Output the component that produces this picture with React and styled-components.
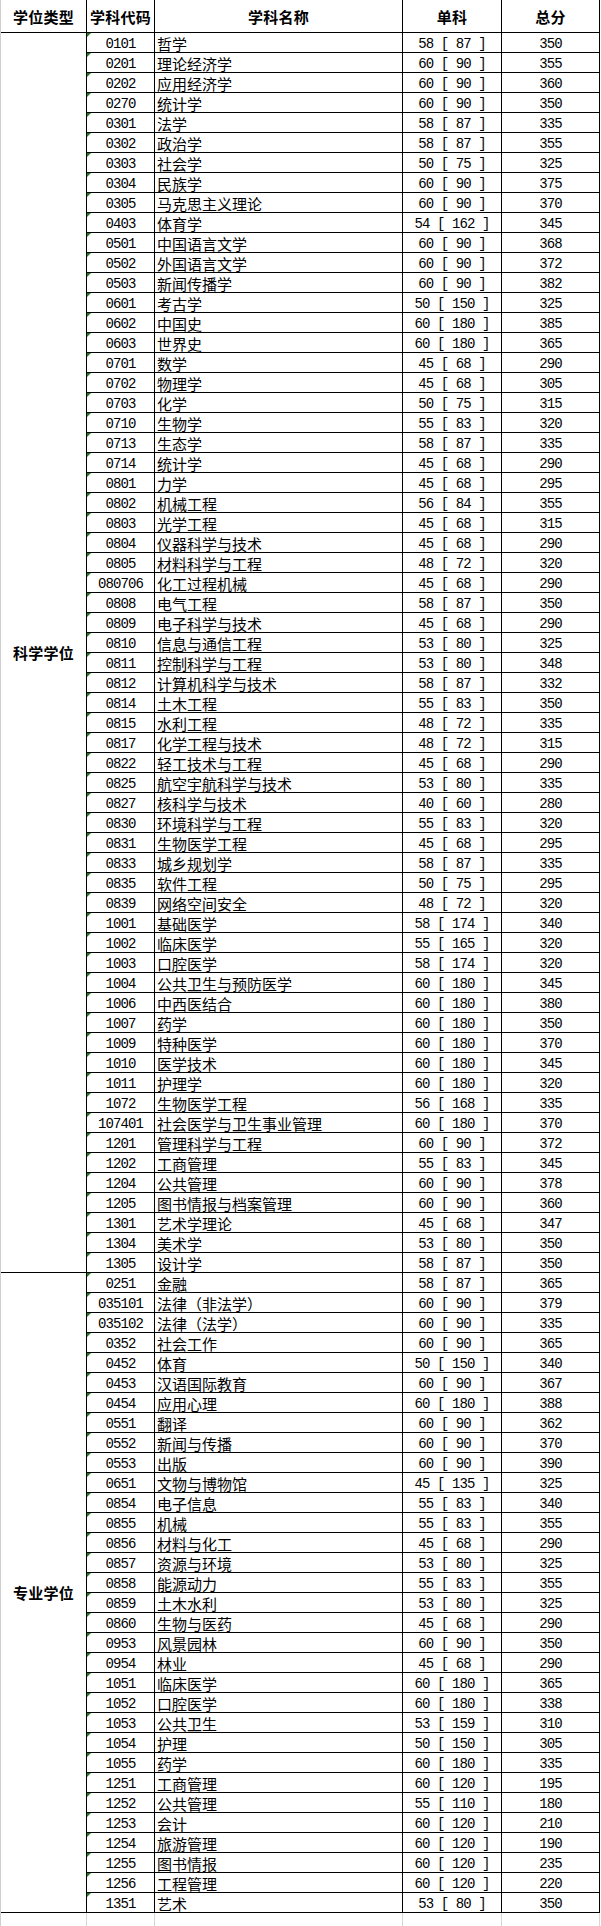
import React from 'react'
import styled, { createGlobalStyle } from 'styled-components'

const GlobalStyle = createGlobalStyle`
  html, body {
    margin: 0;
    padding: 0;
    background: #fff;
    overflow: hidden;
  }
`

const COLS = '86px 68px 248px 99px 98px'

const Sheet = styled.div`
  display: grid;
  grid-template-columns: ${COLS};
  grid-template-rows: 33px;
  grid-auto-rows: 20px;
  width: 599px;
  border-left: 1px solid #cfcfcf;
  font-family: "Noto Sans CJK SC", "Noto Sans", sans-serif;
  color: #000;
`

const Cell = styled.div`
  box-sizing: border-box;
  border-right: 1px solid #000;
  border-bottom: 1px solid #000;
  display: flex;
  align-items: center;
  justify-content: ${p => (p.$left ? 'flex-start' : 'center')};
  padding: 2px 0 0 ${p => (p.$left ? '2px' : '0')};
  font-size: 15px;
  white-space: pre;
  overflow: hidden;
`

const HeadCell = styled(Cell)`
  padding: 0;
  font-weight: bold;
  font-size: 15px;
  letter-spacing: 0.3px;
`

const GroupCell = styled(Cell)`
  grid-column: 1;
  grid-row: span ${p => p.$span};
  padding: 0;
  font-weight: bold;
  font-size: 15px;
  letter-spacing: 0.3px;
`

const NumCell = styled(Cell)`
  font-family: "Liberation Mono", "DejaVu Sans Mono", monospace;
  font-size: 14px;
  letter-spacing: -0.9px;
`

const CodeCell = styled(NumCell)`
  position: relative;

  &::before {
    content: '';
    position: absolute;
    top: 0;
    left: 0;
    border-top: 4px solid #1e7a1e;
    border-right: 4px solid transparent;
  }
`

const Filler = styled.div`
  display: grid;
  grid-template-columns: ${COLS};
  width: 599px;
  height: 13px;
  border-left: 1px solid #cfcfcf;

  & > div {
    border-right: 1px solid #d6d6d6;
  }
`

const science = [
  ['0101', '哲学', 58, 87, 350],
  ['0201', '理论经济学', 60, 90, 355],
  ['0202', '应用经济学', 60, 90, 360],
  ['0270', '统计学', 60, 90, 350],
  ['0301', '法学', 58, 87, 335],
  ['0302', '政治学', 58, 87, 355],
  ['0303', '社会学', 50, 75, 325],
  ['0304', '民族学', 60, 90, 375],
  ['0305', '马克思主义理论', 60, 90, 370],
  ['0403', '体育学', 54, 162, 345],
  ['0501', '中国语言文学', 60, 90, 368],
  ['0502', '外国语言文学', 60, 90, 372],
  ['0503', '新闻传播学', 60, 90, 382],
  ['0601', '考古学', 50, 150, 325],
  ['0602', '中国史', 60, 180, 385],
  ['0603', '世界史', 60, 180, 365],
  ['0701', '数学', 45, 68, 290],
  ['0702', '物理学', 45, 68, 305],
  ['0703', '化学', 50, 75, 315],
  ['0710', '生物学', 55, 83, 320],
  ['0713', '生态学', 58, 87, 335],
  ['0714', '统计学', 45, 68, 290],
  ['0801', '力学', 45, 68, 295],
  ['0802', '机械工程', 56, 84, 355],
  ['0803', '光学工程', 45, 68, 315],
  ['0804', '仪器科学与技术', 45, 68, 290],
  ['0805', '材料科学与工程', 48, 72, 320],
  ['080706', '化工过程机械', 45, 68, 290],
  ['0808', '电气工程', 58, 87, 350],
  ['0809', '电子科学与技术', 45, 68, 290],
  ['0810', '信息与通信工程', 53, 80, 325],
  ['0811', '控制科学与工程', 53, 80, 348],
  ['0812', '计算机科学与技术', 58, 87, 332],
  ['0814', '土木工程', 55, 83, 350],
  ['0815', '水利工程', 48, 72, 335],
  ['0817', '化学工程与技术', 48, 72, 315],
  ['0822', '轻工技术与工程', 45, 68, 290],
  ['0825', '航空宇航科学与技术', 53, 80, 335],
  ['0827', '核科学与技术', 40, 60, 280],
  ['0830', '环境科学与工程', 55, 83, 320],
  ['0831', '生物医学工程', 45, 68, 295],
  ['0833', '城乡规划学', 58, 87, 335],
  ['0835', '软件工程', 50, 75, 295],
  ['0839', '网络空间安全', 48, 72, 320],
  ['1001', '基础医学', 58, 174, 340],
  ['1002', '临床医学', 55, 165, 320],
  ['1003', '口腔医学', 58, 174, 320],
  ['1004', '公共卫生与预防医学', 60, 180, 345],
  ['1006', '中西医结合', 60, 180, 380],
  ['1007', '药学', 60, 180, 350],
  ['1009', '特种医学', 60, 180, 370],
  ['1010', '医学技术', 60, 180, 345],
  ['1011', '护理学', 60, 180, 320],
  ['1072', '生物医学工程', 56, 168, 335],
  ['107401', '社会医学与卫生事业管理', 60, 180, 370],
  ['1201', '管理科学与工程', 60, 90, 372],
  ['1202', '工商管理', 55, 83, 345],
  ['1204', '公共管理', 60, 90, 378],
  ['1205', '图书情报与档案管理', 60, 90, 360],
  ['1301', '艺术学理论', 45, 68, 347],
  ['1304', '美术学', 53, 80, 350],
  ['1305', '设计学', 58, 87, 350],
]

const professional = [
  ['0251', '金融', 58, 87, 365],
  ['035101', '法律（非法学）', 60, 90, 379],
  ['035102', '法律（法学）', 60, 90, 335],
  ['0352', '社会工作', 60, 90, 365],
  ['0452', '体育', 50, 150, 340],
  ['0453', '汉语国际教育', 60, 90, 367],
  ['0454', '应用心理', 60, 180, 388],
  ['0551', '翻译', 60, 90, 362],
  ['0552', '新闻与传播', 60, 90, 370],
  ['0553', '出版', 60, 90, 390],
  ['0651', '文物与博物馆', 45, 135, 325],
  ['0854', '电子信息', 55, 83, 340],
  ['0855', '机械', 55, 83, 355],
  ['0856', '材料与化工', 45, 68, 290],
  ['0857', '资源与环境', 53, 80, 325],
  ['0858', '能源动力', 55, 83, 355],
  ['0859', '土木水利', 53, 80, 325],
  ['0860', '生物与医药', 45, 68, 290],
  ['0953', '风景园林', 60, 90, 350],
  ['0954', '林业', 45, 68, 290],
  ['1051', '临床医学', 60, 180, 365],
  ['1052', '口腔医学', 60, 180, 338],
  ['1053', '公共卫生', 53, 159, 310],
  ['1054', '护理', 50, 150, 305],
  ['1055', '药学', 60, 180, 335],
  ['1251', '工商管理', 60, 120, 195],
  ['1252', '公共管理', 55, 110, 180],
  ['1253', '会计', 60, 120, 210],
  ['1254', '旅游管理', 60, 120, 190],
  ['1255', '图书情报', 60, 120, 235],
  ['1256', '工程管理', 60, 120, 220],
  ['1351', '艺术', 53, 80, 350],
]

const groups = [
  { title: '科学学位', rows: science },
  { title: '专业学位', rows: professional },
]

const Group = ({ title, rows }) => (
  <>
    <GroupCell $span={rows.length}>{title}</GroupCell>
    {rows.map(([code, name, single, full, total]) => (
      <React.Fragment key={title + code}>
        <CodeCell>{code}</CodeCell>
        <Cell $left>{name}</Cell>
        <NumCell>{`${single} [ ${full} ]`}</NumCell>
        <NumCell>{total}</NumCell>
      </React.Fragment>
    ))}
  </>
)

export default function App() {
  return (
    <>
      <GlobalStyle />
      <Sheet>
        <HeadCell>学位类型</HeadCell>
        <HeadCell>学科代码</HeadCell>
        <HeadCell>学科名称</HeadCell>
        <HeadCell>单科</HeadCell>
        <HeadCell>总分</HeadCell>
        {groups.map(g => (
          <Group key={g.title} title={g.title} rows={g.rows} />
        ))}
      </Sheet>
      <Filler>
        <div />
        <div />
        <div />
        <div />
        <div />
      </Filler>
    </>
  )
}
